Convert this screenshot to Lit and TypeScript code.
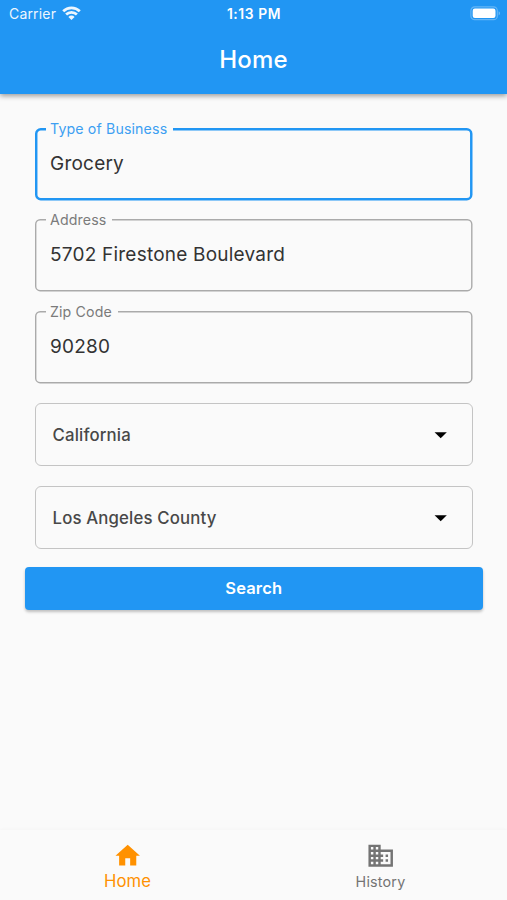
import { LitElement, html, css, svg, nothing } from "lit";
import { customElement, property } from "lit/decorators.js";

const iconPaths = {
  home: svg`<path d="M10 20v-6h4v6h5v-8h3L12 3 2 12h3v8z"/>`,
  business: svg`<path d="M12 7V3H2v18h20V7H12zM6 19H4v-2h2v2zm0-4H4v-2h2v2zm0-4H4V9h2v2zm0-4H4V5h2v2zm4 12H8v-2h2v2zm0-4H8v-2h2v2zm0-4H8V9h2v2zm0-4H8V5h2v2zm10 12h-8v-2h2v-2h-2v-2h2v-2h-2V9h8v10zm-2-8h-2v2h2v-2zm0 4h-2v2h2v-2z"/>`,
  arrow: svg`<path d="M7 10l5 5 5-5z"/>`,
};

@customElement("material-icon")
class MaterialIcon extends LitElement {
  @property() name: keyof typeof iconPaths = "home";
  static styles = css`
    :host { display: block; width: 29.4px; height: 29.4px; }
    svg { display: block; width: 100%; height: 100%; fill: currentColor; }
  `;
  render() {
    return html`<svg viewBox="0 0 24 24">${iconPaths[this.name]}</svg>`;
  }
}

@customElement("status-bar")
class StatusBar extends LitElement {
  static styles = css`
    :host { display: grid; grid-template-columns: 1fr auto 1fr; align-items: center; height: 27px; padding: 0 6px 0 9px; color: #fff; font-size: 14px; line-height: 18px; }
    .carrier { display: flex; align-items: center; gap: 5.5px; letter-spacing: 0.17px; opacity: 0.92; }
    .time { font-weight: 600; font-size: 13.8px; letter-spacing: 0.6px; margin-left: -2px; }
    .battery { justify-self: end; }
    svg { display: block; }
  `;
  render() {
    return html`
      <div class="carrier">
        <span>Carrier</span>
        <svg width="19" height="15" viewBox="0 0 19 15">
          <path d="M9.5 14 6.4 10.9a4.4 4.4 0 0 1 6.2 0z" fill="#fff"/>
          <path d="M1.2 5.3a11.7 11.7 0 0 1 16.6 0M4.1 8.5a7.7 7.7 0 0 1 10.8 0" fill="none" stroke="#fff" stroke-width="2.7"/>
        </svg>
      </div>
      <div class="time">1:13 PM</div>
      <svg class="battery" width="31" height="15" viewBox="0 0 31 15">
        <rect x=".9" y=".9" width="26.4" height="12.8" rx="3.8" fill="none" stroke="#fff" stroke-opacity=".3" stroke-width="1.2"/>
        <rect x="2.7" y="2.6" width="22.8" height="9.4" rx="2.2" fill="#fff"/>
        <path d="M28.7 5.2v4.2c1.6-.7 1.6-3.5 0-4.2z" fill="#fff" fill-opacity=".4"/>
      </svg>
    `;
  }
}

@customElement("text-field")
class TextField extends LitElement {
  @property() label = "";
  @property() value = "";
  @property({ type: Boolean, reflect: true }) focused = false;
  static styles = css`
    :host { display: block; position: relative; height: 72.4px; box-sizing: border-box; padding: 22px 15px 0; --line: #aaa; --tint: #7b7b7b; --stroke: 1.4px; }
    :host([focused]) { --line: #2196f3; --tint: #3d9ff2; --stroke: 2.45px; }
    .frame { position: absolute; inset: 0; width: 100%; height: 100%; overflow: visible; }
    .frame rect { x: calc(var(--stroke) / 2); y: calc(var(--stroke) / 2); width: calc(100% - var(--stroke)); height: calc(100% - var(--stroke)); rx: 4.5px; fill: none; stroke: var(--line); stroke-width: var(--stroke); }
    .label { position: absolute; left: 11px; top: -8px; padding: 0 6px 0 4px; background: #fafafa; color: var(--tint); font-size: 14.2px; line-height: 18px; letter-spacing: 0.13px; white-space: nowrap; }
    .value { color: #333; font-size: 19px; line-height: 26px; letter-spacing: 0.22px; white-space: nowrap; padding-top: 0.85px; }
  `;
  render() {
    return html`
      <svg class="frame"><rect /></svg>
      <span class="label">${this.label}</span>
      <div class="value">${this.value}</div>
    `;
  }
}

@customElement("select-field")
class SelectField extends LitElement {
  @property() value = "";
  static styles = css`
    :host { display: flex; align-items: center; justify-content: space-between; box-sizing: border-box; height: 63.5px; padding: 0 16px 0 16.5px; border: 1px solid #c4c4c4; border-radius: 6px; color: #484848; font-size: 16.8px; font-weight: 500; letter-spacing: 0.15px; }
    .value { padding-top: 1.5px; }
    material-icon { color: #000; }
  `;
  render() {
    return html`<span class="value">${this.value}</span><material-icon name="arrow"></material-icon>`;
  }
}

@customElement("nav-item")
class NavItem extends LitElement {
  @property() icon: keyof typeof iconPaths = "home";
  @property() label = "";
  @property({ type: Boolean, reflect: true }) active = false;
  static styles = css`
    :host { flex: 1; display: flex; flex-direction: column; align-items: center; color: #747474; font-size: 14.3px; }
    :host([active]) { color: #ff9100; font-size: 16.7px; padding-left: 1px; }
    .label { line-height: 22px; letter-spacing: 0.2px; }
    :host([active]) .label { line-height: 20px; letter-spacing: 0.1px; }
  `;
  render() {
    return html`<material-icon name=${this.icon}></material-icon>${this.label ? html`<span class="label">${this.label}</span>` : nothing}`;
  }
}

@customElement("app-root")
class AppRoot extends LitElement {
  static styles = css`
    :host { display: flex; flex-direction: column; height: 900px; overflow: hidden; background: #fafafa; font-family: Inter, "Liberation Sans", sans-serif; }
    header { flex: none; height: 93.5px; background: #2196f3; box-shadow: 0 2px 5px rgba(0, 0, 0, 0.38); }
    h1 { margin: 0; padding-top: 16px; color: #fff; font-size: 24px; line-height: 34px; font-weight: 500; letter-spacing: 0.2px; text-align: center; }
    main { flex: 1; padding: 34.3px 24.5px 0 25px; }
    form { display: flex; flex-direction: column; gap: 19.2px; margin: 0 10px; }
    select-field + select-field { margin-top: 0.3px; }
    button { display: block; width: 100%; height: 43.5px; margin-top: 17.6px; border: 0; border-radius: 4px; background: #2196f3; color: #fff; font: 600 16.5px/43px Inter, sans-serif; letter-spacing: 0.15px; padding: 0; box-shadow: 0 2px 3px rgba(0, 0, 0, 0.24); }
    nav { flex: none; display: flex; height: 70px; box-sizing: border-box; padding-top: 11.2px; box-shadow: 0 -1px 3px rgba(0, 0, 0, 0.025); }
  `;
  render() {
    return html`
      <header>
        <status-bar></status-bar>
        <h1>Home</h1>
      </header>
      <main>
        <form>
          <text-field focused label="Type of Business" value="Grocery"></text-field>
          <text-field label="Address" value="5702 Firestone Boulevard"></text-field>
          <text-field label="Zip Code" value="90280"></text-field>
          <select-field value="California"></select-field>
          <select-field value="Los Angeles County"></select-field>
        </form>
        <button>Search</button>
      </main>
      <nav>
        <nav-item active icon="home" label="Home"></nav-item>
        <nav-item icon="business" label="History"></nav-item>
      </nav>
    `;
  }
}
